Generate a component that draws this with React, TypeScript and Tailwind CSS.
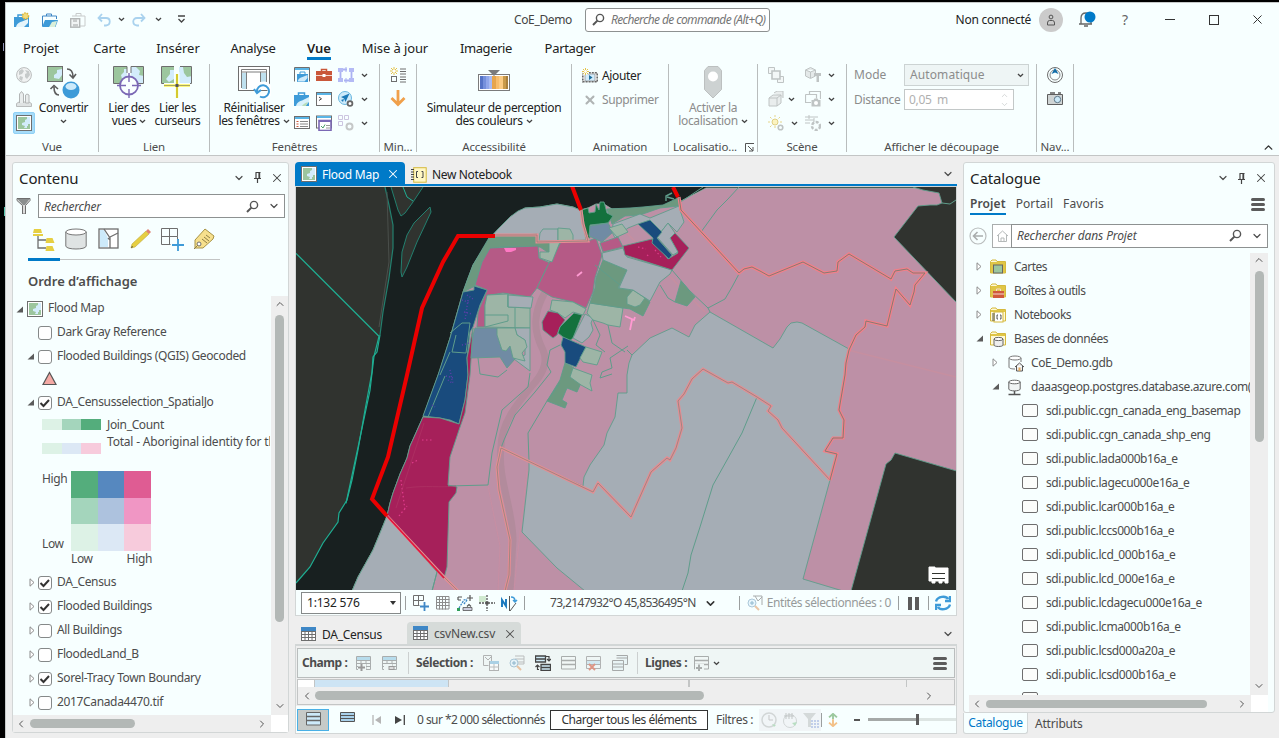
import React from "react";
import { ChevronDown, ChevronUp, ChevronLeft, ChevronRight, X } from "lucide-react";

type Kids = { children?: React.ReactNode };

/* ---------- helpers ---------- */
function Ico({ s = 16, vb = 16, className = "", children }: Kids & { s?: number; vb?: number; className?: string }) {
  return (
    <svg width={s} height={s} viewBox={`0 0 ${vb} ${vb}`} fill="none" className={`shrink-0 ${className}`}>
      {children}
    </svg>
  );
}
const Caret = ({ className = "" }: { className?: string }) => (
  <svg width="7" height="5" viewBox="0 0 7 5" fill="none" className={`shrink-0 ${className}`}>
    <path d="M1 1l2.5 2.4L6 1" stroke="#444" strokeWidth="1.4" />
  </svg>
);
const Down = ({ s = 12 }: { s?: number }) => <ChevronDown size={s} color="#4c4c4c" strokeWidth={2.4} className="shrink-0" />;
const Pin = () => (
  <Ico s={11} vb={11}>
    <path d="M3.500 .5h5M4 .5v6M2 6.500h7M5.500 6.500V11" stroke="#444" strokeWidth="1.2" />
    <path d="M7.300 .5v6" stroke="#444" strokeWidth="1.8" />
  </Ico>
);
const Magnifier = () => (
  <Ico s={13} vb={13}>
    <circle cx="8" cy="5" r="3.6" stroke="#555" strokeWidth="1.4" />
    <path d="M5.4 7.6L1 12" stroke="#555" strokeWidth="2" />
  </Ico>
);
const Burger = () => (
  <div className="flex w-[14px] shrink-0 flex-col gap-[2px]">
    <div className="h-[3px] rounded-sm bg-[#5b5b5b]" />
    <div className="h-[3px] rounded-sm bg-[#5b5b5b]" />
    <div className="h-[3px] rounded-sm bg-[#5b5b5b]" />
  </div>
);

/* ---------- icons ---------- */
const MapIcon = ({ s = 16 }: { s?: number }) => (
  <Ico s={s}>
    <rect x=".5" y=".5" width="15" height="15" fill="#fff" stroke="#6e6e6e" />
    <rect x="2" y="2" width="12" height="12" fill="#9cc69e" />
    <path d="M14 2v7h-2v2h-1v2H8l1-2-3-1V8l3-1V5l2-1V2z" fill="#d3ecfb" />
  </Ico>
);
const Globe = () => (
  <Ico>
    <circle cx="8" cy="8" r="7.4" fill="#f0f2f2" stroke="#b9bcbc" />
    <path d="M3 4l3-2 2 2-2 3-3 1zM9 3l4 1 1 4-3 4-2-2V7l2-1zM4 9l3 1-1 4-3-2z" fill="#c6caca" />
  </Ico>
);
const LocalScene = () => (
  <Ico>
    <path d="M.5 12.500l2.500-1.500h10l2.500 1.500v3H.5z" fill="#dfe3e3" stroke="#b9bcbc" />
    <path d="M3.500 12V3L5.500.5 7.500 3v9M9.500 12V4l1.500-1 2 1v8z" fill="#e9eded" stroke="#b3b6b6" />
  </Ico>
);
const Convert = () => (
  <Ico s={33} vb={33}>
    <rect x=".5" y=".5" width="15" height="15" fill="#9cc69e" stroke="#6e6e6e" />
    <path d="M15 3v6l-3 4-5-1v-3l3-2V4z" fill="#d3ecfb" />
    <circle cx="24" cy="24" r="8.500" fill="#3e9bd8" />
    <ellipse cx="24" cy="20.500" rx="5.500" ry="3.500" fill="#cdeafa" />
    <path d="M20 3c4 0 6 3 6 8M22.500 8.500l3.500 3.500 3-4M12 29c-4 0-5-3-5-8M3.500 23l3.500-3.500L11 23" stroke="#5c5c5c" strokeWidth="1.600" />
  </Ico>
);
const LinkViews = () => (
  <Ico s={33} vb={33}>
    <path d="M1 1h13v10l-5 6H1z" fill="#9cc69e" /><path d="M14 3v9l-5 1-1-4 3-3V3z" fill="#d3ecfb" />
    <path d="M18 1h13v16h-5l-8-6z" fill="#d3ecfb" /><path d="M23 1h8v9l-5-1 1-4z" fill="#9cc69e" />
    <path d="M8 17.500H.5V.5H14V7M18 7V.5h12.500v17H25" stroke="#6e6e6e" />
    <circle cx="16" cy="19.500" r="9" fill="#f9ffff" stroke="#7b68b5" strokeWidth="1.800" />
    <path d="M16 7v9M16 23v9M4 19.500h9M19 19.500h9" stroke="#7b68b5" strokeWidth="1.400" />
  </Ico>
);
const LinkCursors = () => (
  <Ico s={33} vb={33}>
    <path d="M1 1h12v16H1z" fill="#9cc69e" /><path d="M13 4v9l-5 3-3-3 4-5V4z" fill="#d3ecfb" />
    <path d="M18 1h13v16H18z" fill="#d3ecfb" /><path d="M22 1h9v9l-5 1-3-4z" fill="#9cc69e" />
    <path d="M13 17.500H.5V.5H13M19 .5h11.500v17H19" stroke="#6e6e6e" />
    <path d="M16 6v26M3 19.500h26" stroke="#f8ffff" strokeWidth="5" />
    <path d="M16 8v24M3 19.500h26" stroke="#ffef00" strokeWidth="2.200" />
    <path d="M16 8v24M3 19.500h26" stroke="#888" strokeWidth=".7" />
    <rect x="14.500" y="18" width="3" height="3" fill="#555" />
  </Ico>
);
const ResetPanes = () => (
  <Ico s={33} vb={33}>
    <rect x=".5" y=".5" width="31" height="24" fill="#fff" stroke="#6e6e6e" />
    <path d="M3.500 22V3.500h25V20M8.500 6v17M22.500 6v14M3 6h26" stroke="#7d7d7d" />
    <path d="M4 7h4v16H4zM23 7h5v13h-5z" fill="#bfe0ee" />
    <path d="M19 25a6.500 6.500 0 1 1 3 5" stroke="#fff" strokeWidth="5" />
    <path d="M19 26a6 6 0 1 1 3 4.500M16 23l3 4 4-3" stroke="#3e9bd8" strokeWidth="2" />
  </Ico>
);
const CatalogWin = () => (
  <Ico>
    <path d="M.5 14.500V.5h15v14" stroke="#6e6e6e" /><path d="M1 1h14v2H1z" fill="#5ab5e6" />
    <path d="M3 7h11v8H3z" fill="#3e9bd8" /><path d="M6 7V5h5v2" stroke="#3e9bd8" /><path d="M3.500 14.500c1-3 3-4 5-4.500l5-2v3l-3 3.500z" fill="#cdeafa" />
  </Ico>
);
const Toolbox = () => (
  <Ico>
    <path d="M0 4h16v10H0z" fill="#c9573a" /><path d="M5.500 4V2.500h5V4" stroke="#c9573a" strokeWidth="1.500" />
    <path d="M0 8.500h16" stroke="#f4d8cf" /><rect x="6.500" y="7" width="3" height="3" fill="#fff" />
  </Ico>
);
const ModelIcon = () => (
  <Ico>
    <path d="M2.500 3v9M4 2.500h5M13.500 3v9M12 13.500H6" stroke="#aab1f2" strokeWidth="1.800" />
    <path d="M0 1h5v4H0zM11 1h5v4h-5zM11 11h5v4h-5zM0 11h5v4H0z" fill="#b4baf5" /><path d="M8 0v5M8 11v5" stroke="#aab1f2" />
  </Ico>
);
const CaseIcon = () => (
  <Ico>
    <path d="M0 4h15v11H0z" fill="#3e9bd8" /><path d="M4.500 4V2h6v2" stroke="#3e9bd8" strokeWidth="1.500" />
    <path d="M2 15c1-4 4-5 6-5.500L15 6v5l-4 4z" fill="#d9f1fb" /><path d="M8 15c1-2 3-3 6-4l-2 4z" fill="#b9ddb9" />
  </Ico>
);
const PyWin = () => (
  <Ico>
    <rect x=".5" y="1.500" width="15" height="13" fill="#fff" stroke="#6e6e6e" /><path d="M1 2h14v2H1z" fill="#5ab5e6" />
    <path d="M3 6l2.500 1.800L3 9.500" stroke="#444" />
  </Ico>
);
const Plane = () => (
  <Ico>
    <circle cx="7" cy="7" r="6.500" fill="#cdeafa" stroke="#69b7e0" />
    <path d="M11.500 2.500L3 6l3 1.500L7.500 11z M3 9l3-1-1 3z" fill="#1b7ab8" />
    <circle cx="12" cy="12.500" r="2.400" fill="#fff" stroke="#666" strokeWidth="1.800" />
  </Ico>
);
const ListWin = () => (
  <Ico>
    <rect x=".5" y="1.500" width="15" height="12" fill="#fff" stroke="#6e6e6e" /><path d="M1 2h14v2H1z" fill="#5ab5e6" />
    <path d="M2.500 6.500h2M2.500 9h2M2.500 11.500h2" stroke="#c9573a" /><path d="M6 6.500h8M6 9h8M6 11.500h8" stroke="#888" />
  </Ico>
);
const TaskWin = () => (
  <Ico>
    <rect x=".5" y="1" width="15" height="12" fill="#fff" stroke="#6e6e6e" /><path d="M1 1h14v2H1z" fill="#5ab5e6" />
    <rect x="3" y="5.500" width="12" height="10" fill="#fff" stroke="#7b68b5" strokeWidth="1.600" /><path d="M3 6.500h12" stroke="#7b68b5" />
    <path d="M5 11l2 2 2-3.500" stroke="#4b9e6a" /><path d="M10 10.500h4M10 13h4" stroke="#999" />
  </Ico>
);
const GridGear = () => (
  <Ico>
    <path d="M.5 .5h4v4h-4zM6.500 .5h4v4h-4zM.5 6.500h4v4h-4z" stroke="#ccc5e0" />
    <circle cx="11.500" cy="11.500" r="3" stroke="#c5c8c8" strokeWidth="2" />
  </Ico>
);
const ListStar = () => (
  <Ico>
    <rect x="1.500" y="9.500" width="5" height="5" stroke="#6e6e6e" /><path d="M10 2h6M10 4.500h6M10 7h6M10 10h6M10 12.500h6M10 15h6" stroke="#6e6e6e" />
    <path d="M4 0v8M0 4h8M1 1l6 6M7 1L1 7" stroke="#e5c44a" /><circle cx="4" cy="4" r="1.500" fill="#fff" />
  </Ico>
);
const OrangeDown = () => (
  <Ico s={18} vb={18}><path d="M9 1v14M2.500 9L9 15.500 15.500 9" stroke="#f0a04b" strokeWidth="2.800" /></Ico>
);
const ColorVision = () => (
  <svg width="32" height="22" viewBox="0 0 32 22" fill="none">
    <rect x=".5" y="4.500" width="31" height="16" fill="#fff" stroke="#7b7b7b" />
    <path d="M2 6h3v13H2z" fill="#5573c6" /><path d="M5 6h3v13H5z" fill="#7590dc" /><path d="M8 6h3v13H8z" fill="#91a7ea" /><path d="M11 6h3v13h-3z" fill="#a8bbf3" />
    <path d="M14 6h4v13h-4z" fill="#e6a54c" /><path d="M18 6h3v13h-3z" fill="#f7bd6b" /><path d="M21 6h4v13h-4z" fill="#fbcb83" /><path d="M25 6h3v13h-3z" fill="#c99a4a" /><path d="M28 6h2v13h-2z" fill="#a87f3c" />
    <path d="M10 0h12l-6 6z" fill="#7b7b7b" />
  </svg>
);
const FilmAdd = () => (
  <Ico>
    <rect x=".8" y="4.800" width="14.400" height="9" fill="#fff" stroke="#666" strokeWidth="1.600" strokeDasharray="2 1" />
    <rect x="3" y="6" width="10" height="7" fill="#d3ecfb" stroke="#777" strokeWidth=".6" /><path d="M7 7l3.500 2.500L7 12z" fill="#1b6e9e" />
    <circle cx="3.500" cy="3.500" r="3.500" fill="#f7ffff" />
    <path d="M3.500 0v7M0 3.500h7M1 1l5 5M6 1L1 6" stroke="#e5c44a" /><circle cx="3.500" cy="3.500" r="1.400" fill="#fff" />
  </Ico>
);
const GpsPin = () => (
  <svg width="18" height="33" viewBox="0 0 18 33" fill="none">
    <path d="M4 .5h10l3.500 4v19L9 32 .5 23.500v-19z" fill="#cdd2d2" stroke="#bcc0c0" /><circle cx="9" cy="10.500" r="5" fill="#fff" />
  </svg>
);
const G = "#bfc4c4";
const SceneCopy = () => <Ico><path d="M.5 .5h6v6h-6zM9.500 9.500h6v6h-6z" fill="#f3f7f7" stroke={G} /><path d="M4 4h8v8H4z" fill="#f3f7f7" stroke={G} strokeWidth="1.600" /></Ico>;
const SceneCube = () => <Ico><path d="M.5 3l5-2.500 5 2.500v6l-5 2.500-5-2.500zM.5 3l5 2 5-2M5.500 5v6" fill="#e4e9e9" stroke={G} /><path d="M9 6h7v3H9zM11.500 9h2.500v6h-2.500z" fill={G} /></Ico>;
const SceneBox = () => <Ico><path d="M1 7h8v8H1zM1 7l4-3h8v8l-4 3M9 7l4-3M6 2l3-2h6v7" fill="#e9eded" stroke={G} /></Ico>;
const SceneCam = () => <Ico><path d="M4.500 4V.5h11V8M.500 3.500h11v4M.5 3.500v8H6" stroke={G} strokeWidth="1.200" /><path d="M6.500 9h2l1-1.500h3l1 1.500h2v6.500h-9z" fill={G} /><circle cx="11" cy="12" r="2" fill="#fff" /></Ico>;
const SceneSun = () => (
  <Ico>
    <circle cx="7" cy="7" r="3" fill="#fbf3c0" stroke="#e0cf85" /><path d="M7 0v2M0 7h2M2 2l1.500 1.500M12 2l-1.500 1.500M12 7h2M2 12l1.500-1.500M6 12h2" stroke="#e6d58a" />
    <circle cx="12.500" cy="12.500" r="2.300" stroke={G} strokeWidth="1.600" />
  </Ico>
);
const SceneFx = () => <Ico><path d="M0 2h13M0 5h9M0 8h5M4 0v4M9 3v4" stroke={G} /><circle cx="11" cy="11" r="4" stroke={G} strokeWidth="2.400" strokeDasharray="3 1.500" /></Ico>;
const Compass = () => (
  <Ico>
    <circle cx="8" cy="8" r="7.500" stroke="#6e6e6e" /><circle cx="8" cy="8" r="5" stroke="#888" /><path d="M8 1l3.500 6L8 5.500 4.500 7z" fill="#0f6ca8" />
  </Ico>
);
const Camera = () => (
  <Ico>
    <path d="M.5 3.500h15v10H.5z" fill="#cfd4d4" stroke="#5e5e5e" /><path d="M3 2h5M11 2h3" stroke="#5e5e5e" strokeWidth="1.500" /><circle cx="10.500" cy="8.500" r="3.200" fill="#cbe9f8" stroke="#5e7788" />
  </Ico>
);
const TableIcon = () => (
  <Ico s={15} vb={15}>
    <rect x=".5" y=".5" width="14" height="13" fill="#fff" stroke="#6e6e6e" /><path d="M0 0h15v4H0z" fill="#3e87c6" />
    <path d="M0 4.500h15M0 7.500h15M0 10.500h15M4 4v10M7.500 4v10M11 4v10" stroke="#6e6e6e" />
  </Ico>
);
const FieldIcon = ({ add }: { add?: boolean }) => (
  <Ico s={15} vb={15}>
    <path d="M.5 .5h14v13H.5zM0 4.500h15M0 7.500h15M0 10.500h15M5 4v10M10 4v10" stroke="#a9adad" /><path d="M1 1h13v3H1z" fill="#b7dcec" />
    <rect x="2" y="8" width="8" height="7" fill="#eff6f5" />
    {add ? <path d="M5.500 8v7M2 11.500h7" stroke="#999" strokeWidth="2" /> : <rect x="7" y="10.500" width="5" height="3" fill="#ddd" stroke="#999" />}
  </Ico>
);
const Rows = ({ dim = false, blue = false, add = false }: { dim?: boolean; blue?: boolean; add?: boolean }) => (
  <svg width="15" height="15" viewBox="0 0 15 15" fill="none" className={dim ? "shrink-0 opacity-50" : "shrink-0"}>
    <path d="M.5 .5h14v12.500H.5z" fill={blue ? "#cdeafa" : "#f4f8f8"} stroke="#666" /><path d="M0 4.500h15M0 8.500h15" stroke="#666" strokeWidth="1.300" />
    {add && <><path d="M1 8h9v7H1z" fill="#eff6f5" /><path d="M5 8.500V15M2 12h6" stroke="#666" strokeWidth="2" /></>}
  </svg>
);
const Folder = ({ children }: Kids) => (
  <Ico>
    <path d="M.5 14V2.500L2 1h4l1 1.500h8.500V14z" fill="#fff9d5" stroke="#d5b93d" /><path d="M1 3h14v2H1z" fill="#e0c646" />
    {children}
  </Ico>
);

/* ---------- ribbon ---------- */
function Group({ w, label, children }: Kids & { w: string; label: React.ReactNode }) {
  return (
    <div className={`flex h-[88px] shrink-0 flex-col border-r border-[#b9bdbd] ${w}`}>
      <div className="flex h-[74px] shrink-0">{children}</div>
      <div className="flex h-[18px] shrink-0 items-center justify-center text-[11.500px] tracking-[-0.15px] text-[#4c4c4c]">{label}</div>
    </div>
  );
}
function Big({ icon, a, b, w, dim, caret }: { icon: React.ReactNode; a: string; b?: string; w: string; dim?: boolean; caret?: boolean }) {
  return (
    <div className={`flex shrink-0 flex-col items-center ${w} ${dim ? "text-[#8c8c8c]" : "text-[#222]"}`}>
      <div className="flex h-[37px] items-start justify-center pt-[2px]">{icon}</div>
      <div className="h-[13px] whitespace-nowrap leading-[13px]">{a}</div>
      <div className="flex h-[14px] items-center gap-[3px] whitespace-nowrap leading-[14px]">
        {b}
        {caret && <Caret />}
      </div>
    </div>
  );
}
function TitleBar() {
  return (
    <div className="flex h-[33px] shrink-0 items-center">
      <div className="flex w-[190px] items-center pl-[8px]">
        <Ico>
          <path d="M0 5h15v10H0z" fill="#3e9bd8" /><path d="M4 5V3h5" stroke="#3e9bd8" strokeWidth="1.500" /><path d="M2 15c1-4 4-5 6-5.500L14 7v4l-4 4z" fill="#e5f5fb" />
          <circle cx="11.500" cy="4" r="3" fill="#f3dc7b" stroke="#dcb63c" strokeWidth="1.500" strokeDasharray="1.500 1" />
        </Ico>
        <div className="w-[12px]" />
        <Ico>
          <path d="M.5 14V4h14v3" stroke="#3e87c6" /><path d="M4.500 4V2h5v2" stroke="#3e87c6" /><path d="M3 8h13l-2.500 7H0z" fill="#3e9bd8" /><path d="M7 15l3-5 5-1-2 6z" fill="#d9efd9" />
        </Ico>
        <div className="w-[12px]" />
        <Ico className="opacity-60">
          <path d="M2 4h13v10H9M6 4V1.500h5V4" stroke="#aaa" /><rect x=".7" y="6.700" width="9" height="8.500" fill="#eee" stroke="#888" strokeWidth="1.400" /><path d="M3 7h4v3H3zM3 12h5v3H3z" fill="#aaa" />
        </Ico>
        <div className="w-[11px]" />
        <Ico><path d="M5 2L1.500 6 5 9.500M2 6h7c5 0 5 7 0 7.500H7" stroke="#a9d2ee" strokeWidth="1.800" /></Ico>
        <Caret className="ml-[5px]" />
        <Ico className="ml-[6px]"><path d="M10 2l3.500 4L10 9.500M13 6H6C1 6 1 13 6 13.500h2" stroke="#a9d2ee" strokeWidth="1.800" /></Ico>
        <Caret className="ml-[8px]" />
        <Ico s={9} vb={9} className="ml-[15px]"><path d="M1 1h7M1.500 4l3 3 3-3" stroke="#444" strokeWidth="1.300" /></Ico>
      </div>
      <div className="w-[390px] pr-[14px] text-right text-[#444]">CoE_Demo</div>
      <div className="-ml-px flex h-[24px] w-[185px] items-center gap-[6px] whitespace-nowrap rounded-[3px] border border-[#8d9191] bg-white pl-[6px] italic tracking-[-0.63px] text-[#757575]">
        <Magnifier />Recherche de commande (Alt+Q)
      </div>
      <div className="flex flex-1 items-center justify-end pr-[14px]">
        <span className="tracking-[-0.25px] text-[#222]">Non connecté</span>
        <div className="ml-[8px] flex h-[24px] w-[24px] items-center justify-center rounded-full bg-[#cbcbcb]">
          <Ico s={12} vb={12}><circle cx="6" cy="3" r="1.900" stroke="#555" /><path d="M2.500 11V9q0-2.500 2-2.500h3q2 0 2 2.500v2z" stroke="#555" /></Ico>
        </div>
        <Ico s={17} vb={17} className="ml-[16px]">
          <path d="M2 13V7q0-5 5-5t5 5v6M0 13h13M5 15h4" stroke="#666" strokeWidth="1.300" /><circle cx="11" cy="6" r="5.500" fill="#007ac8" />
        </Ico>
        <span className="ml-[26px] w-[8px] text-[14px] text-[#666]">?</span>
        <div className="ml-[35px] h-px w-[10px] bg-[#333]" />
        <div className="ml-[34px] h-[10px] w-[10px] border border-[#333]" />
        <X size={15} color="#333" strokeWidth={1.600} className="ml-[31px]" />
      </div>
    </div>
  );
}
function Ribbon() {
  return (
    <div className="flex h-[153px] shrink-0 flex-col border-b border-[#c3c5c5] bg-[#f7ffff]">
      <TitleBar />
      <div className="flex h-[25px] shrink-0 items-start text-[13px] leading-[24px] tracking-[-0.05px] text-[#222]">
        <div className="w-[70px] text-center">Projet</div>
        <div className="ml-[8px] w-[51px] text-center">Carte</div>
        <div className="ml-[13px] w-[60px] text-center">Insérer</div>
        <div className="ml-[14px] w-[60px] pl-[2px] text-center tracking-[-0.3px]">Analyse</div>
        <div className="ml-[19px] flex w-[36px] flex-col items-center">
          <div className="h-[21px] font-semibold">Vue</div>
          <div className="h-[3px] w-[24px] bg-[#007ac8]" />
        </div>
        <div className="ml-[14px] w-[88px] text-center tracking-[-0.1px]">Mise à jour</div>
        <div className="ml-[15px] w-[64px] text-center tracking-[-0.4px]">Imagerie</div>
        <div className="ml-[19px] w-[66px] text-center tracking-[-0.3px]">Partager</div>
      </div>
      <div className="flex pt-[3px]">
        <Group w="w-[93px]" label="Vue">
          <div className="flex w-[34px] flex-col items-center pl-[2px] pt-[3px]">
            <Globe />
            <div className="h-[8px]" />
            <LocalScene />
            <div className="mt-[5px] flex h-[22px] w-[22px] items-center justify-center rounded-[2px] border border-[#8fd0f5] bg-[#a6dcf9]"><MapIcon /></div>
          </div>
          <Big w="w-[47px]" icon={<div className="-ml-[1px]"><Convert /></div>} a="Convertir" caret />
        </Group>
        <Group w="w-[111px]" label="Lien">
          <Big w="w-[60px]" icon={<LinkViews />} a="Lier des" b="vues" caret />
          <Big w="w-[37px]" icon={<LinkCursors />} a="Lier les" b="curseurs" />
        </Group>
        <Group w="w-[170px]" label="Fenêtres">
          <Big w="w-[88px]" icon={<ResetPanes />} a="Réinitialiser" b="les fenêtres" caret />
          <div className="-ml-[4px] grid h-[72px] grid-cols-[22px_22px_23px_8px] content-start items-center gap-y-[8px] pt-[3px]">
            <CatalogWin /><Toolbox /><ModelIcon /><Caret />
            <CaseIcon /><PyWin /><Plane /><Caret />
            <ListWin /><TaskWin /><GridGear /><Caret />
          </div>
        </Group>
        <Group w="w-[37px]" label="Min...">
          <div className="flex w-full flex-col items-center gap-[6px] pt-[3px]"><ListStar /><OrangeDown /></div>
        </Group>
        <Group w="w-[155px]" label="Accessibilité">
          <Big w="w-[154px]" icon={<div className="pt-[4px]"><ColorVision /></div>} a="Simulateur de perception" b="des couleurs" caret />
        </Group>
        <Group w="w-[97px]" label="Animation">
          <div className="flex flex-col gap-[8px] pl-[10px] pt-[4px] leading-[16px]">
            <div className="flex items-center gap-[4px] text-[#222]"><FilmAdd />Ajouter</div>
            <div className="flex items-center gap-[4px] text-[#8c8c8c]"><div className="w-[16px] pl-px"><X size={14} color="#b0b4b4" strokeWidth={3.500} /></div>Supprimer</div>
          </div>
        </Group>
        <Group
          w="w-[89px]"
          label={<><span>Localisatio...</span><Ico s={9} vb={9} className="-mr-[1px] ml-[8px]"><path d="M.5 9V.5H9M3 3l5 5M8 4v4H4" stroke="#555" /></Ico></>}
        >
          <Big w="w-[88px]" icon={<GpsPin />} a="Activer la" b="localisation" dim caret />
        </Group>
        <Group w="w-[89px]" label="Scène">
          <div className="flex flex-col gap-[8px] pl-[10px] pt-[3px]">
            <div className="flex items-center"><SceneCopy /><div className="w-[21px]" /><SceneCube /><Caret className="ml-[7px]" /></div>
            <div className="flex items-center"><SceneBox /><Caret className="ml-[4px] mr-[10px]" /><SceneCam /><Caret className="ml-[7px]" /></div>
            <div className="flex items-center"><SceneSun /><Caret className="ml-[7px] mr-[7px]" /><SceneFx /><Caret className="ml-[7px]" /></div>
          </div>
        </Group>
        <Group w="w-[190px]" label="Afficher le découpage">
          <div className="flex flex-col gap-[3px] pl-[7px] text-[#8c8c8c]">
            <div className="flex items-center"><div className="w-[50px] tracking-[0px]">Mode</div>
              <div className="flex h-[22px] w-[125px] items-center justify-between border border-[#ccd3d3] bg-[#eef5f5] pl-[5px] pr-[4px] tracking-[0.1px]">Automatique<Caret /></div>
            </div>
            <div className="flex items-center"><div className="w-[50px] tracking-[-0.25px]">Distance</div>
              <div className="flex h-[21px] w-[110px] items-center justify-between border border-[#c3c8c8] bg-white pl-[4px] pr-[4px] text-[#b0b0b0]"><span>0,05 &nbsp;m</span>
                <div className="flex flex-col"><ChevronUp size={9} color="#c9cdcd" /><ChevronDown size={9} color="#c9cdcd" /></div></div>
            </div>
          </div>
        </Group>
        <Group w="w-[37px]" label="Nav...">
          <div className="flex w-full flex-col items-center gap-[8px] pt-[3px]"><Compass /><Camera /></div>
        </Group>
        <div className="flex flex-1 items-end justify-end pr-[4px]"><ChevronUp size={13} color="#333" strokeWidth={2.600} className="-mb-[2px]" /></div>
      </div>
    </div>
  );
}

/* ---------- contents pane ---------- */
const Check = ({ on }: { on?: boolean }) => (
  <div className="flex h-[14px] w-[14px] shrink-0 items-center justify-center rounded-[3px] border border-[#858989] bg-white">
    {on && <Ico s={12} vb={12}><path d="M1.500 6l3 3L10 3" stroke="#333" strokeWidth="2" /></Ico>}
  </div>
);
const Open = () => <Ico s={7} vb={7}><path d="M7 .5v6H.5z" fill="#5b5b5b" /></Ico>;
const Closed = () => (
  <svg width="6" height="9" viewBox="0 0 6 9" fill="none" className="shrink-0"><path d="M1 .8v7.400L5 4.500z" fill="#fff" stroke="#8c8c8c" /></svg>
);

function Layer({ name, on, open, closed }: { name: string; on?: boolean; open?: boolean; closed?: boolean }) {
  return (
    <div className="flex h-[24px] shrink-0 items-center pl-[13px]">
      <div className="flex w-[12px] items-center pb-px pl-px">{open ? <Open /> : closed ? <div className="pb-px pl-[2px]"><Closed /></div> : null}</div>
      <Check on={on} />
      <span className="ml-[5px] whitespace-nowrap pb-[2px]">{name}</span>
    </div>
  );
}
function Contents() {
  return (
    <div className="ml-[6px] flex h-[571px] w-[277px] shrink-0 flex-col rounded-[3px] border border-[#d2d6d6] bg-[#f7ffff] text-[#4c4c4c]">
      <div className="flex h-[31px] shrink-0 items-center pb-[2px] pl-[6px] pr-[4px]">
        <span className="flex-1 text-[15px] tracking-[-0.1px] text-[#222]">Contenu</span>
        <Down /><div className="w-[7px]" /><Pin /><div className="w-[7px]" /><X size={14} color="#444" strokeWidth={1.800} />
      </div>
      <div className="flex h-[24px] shrink-0 items-center pl-[3px]">
        <Ico className="mr-[6px]"><path d="M1 .5h13v2L9.500 7.500V16h-3V7.500L1 2.500z" fill="#ddd" stroke="#6e6e6e" /><path d="M1.500 1h12L9 7H7z" fill="#8b8f8f" /></Ico>
        <div className="flex h-[24px] w-[247px] items-center border border-[#8d9191] bg-white pl-[5px] italic tracking-[-0.2px]">
          <span className="flex-1 pt-px">Rechercher</span><Magnifier /><div className="w-[9px]" /><Down /><div className="w-[4px]" />
        </div>
      </div>
      <div className="flex h-[41px] shrink-0 items-start pl-[15px] pt-[10px]">
        <div className="flex w-[32px] flex-col items-center">
          <Ico s={24} vb={24}><path d="M6 8v12h8M6 12h8" stroke="#6e6e6e" strokeWidth="1.300" /><path d="M2 1h7l1 4H1zM1 6h10v2H1zM14.500 10h6l2 5h-9zM14.500 18h6l2 5h-9z" fill="#e6cf42" /></Ico>
        </div>
        <div className="flex w-[32px] justify-center"><Ico s={22} vb={22}><path d="M.8 4v14c0 4 20.400 4 20.400 0V4z" fill="#dfe3e3" stroke="#777" /><ellipse cx="11" cy="4" rx="10.200" ry="3" fill="#fff" stroke="#777" /></Ico></div>
        <div className="flex w-[32px] justify-center"><Ico s={21} vb={21}><rect x="1" y="1" width="19" height="19" fill="#fff" stroke="#6e6e6e" strokeWidth="1.300" /><path d="M2 2h4l4 8v9H2z" fill="#cdeafa" /><path d="M6 1l6 9v10M12 9l8-4M10 10l2 2" stroke="#6e6e6e" strokeWidth="1.300" /></Ico></div>
        <div className="flex w-[32px] justify-center"><Ico s={21} vb={21}><path d="M1 20l1-4L16 3l3 3L5 19z" fill="#e6cf42" stroke="#bda63a" strokeWidth=".6" /><path d="M16 3l2-2 3 3-2 2z" fill="#df8272" /><path d="M1 20l1-2 1 1z" fill="#333" /></Ico></div>
        <div className="flex w-[32px] justify-center"><Ico s={23} vb={23}><path d="M.5 .5h16v8M.5 .5v16h9M8.500 .5v16M.5 8.500h16v3" stroke="#6e6e6e" /><path d="M17 11v12M11 17h12" stroke="#3e9bd8" strokeWidth="1.800" /></Ico></div>
        <div className="flex w-[32px] justify-center"><Ico s={22} vb={22}><path d="M12 1l9 7-1 3-10 9H2v-8z" fill="#f7e08d" stroke="#a89446" /><circle cx="6" cy="16" r="2" fill="#fff" stroke="#6e6e6e" /><path d="M9 11l5 4M11 9l5 4M13 7l4 3M5 17l-4 4" stroke="#8e7e46" /></Ico></div>
      </div>
      <div className="mt-[-1px] flex h-[3px] shrink-0 items-center pl-[15px]"><div className="h-[3px] w-[32px] bg-[#007ac8]" /><div className="h-px w-[160px] bg-[#c3c5c5]" /></div>
      <div className="h-[35px] shrink-0 pl-[15px] pt-[11px] text-[13px] font-semibold leading-[18px] tracking-[0px]">Ordre d’affichage</div>
      <div className="flex min-h-0 flex-1">
        <div className="flex w-[257px] flex-col overflow-hidden">
          <div className="flex h-[25px] shrink-0 items-center pl-[3px] pt-px"><Open /><div className="w-[4px]" /><MapIcon /><span className="ml-[5px] pb-[2px]">Flood Map</span></div>
          <Layer name="Dark Gray Reference" />
          <Layer name="Flooded Buildings (QGIS) Geocoded" open />
          <div className="flex h-[22px] shrink-0 items-center pb-[3px] pl-[29px]"><Ico s={15} vb={15}><path d="M7.500 1.500L14 13.500H1z" fill="#f4a9a4" stroke="#555" strokeWidth="1.200" /></Ico></div>
          <Layer name="DA_Censusselection_SpatialJo" on open />
          <div className="flex h-[19px] shrink-0 items-center whitespace-nowrap pl-[29px]">
            <div className="flex h-[11px]"><div className="w-[20px] bg-[#ddf2e6]" /><div className="w-[19px] bg-[#a4d5bc]" /><div className="w-[20px] bg-[#54ad7c]" /></div>
            <span className="ml-[6px]">Join_Count</span>
          </div>
          <div className="flex h-[22px] shrink-0 items-start whitespace-nowrap pl-[29px]">
            <div className="mt-[9px] flex h-[11px] shrink-0"><div className="w-[20px] bg-[#ddf2e6]" /><div className="w-[19px] bg-[#dce8f5]" /><div className="w-[20px] bg-[#f7cbdc]" /></div>
            <span className="ml-[6px] tracking-[-0.2px]">Total - Aboriginal identity for the population</span>
          </div>
          <div className="flex h-[98px] shrink-0 pl-[29px] pt-[15px]">
            <div className="flex h-[80px] w-[29px] flex-col justify-between leading-[15px]"><span>High</span><span>Low</span></div>
            <div>
              <div className="grid h-[80px] w-[80px] grid-cols-3 grid-rows-3">
                <div className="bg-[#54ad7c]" /><div className="bg-[#5688bf]" /><div className="bg-[#df5c93]" />
                <div className="bg-[#a4d5bc]" /><div className="bg-[#adc2de]" /><div className="bg-[#f096c4]" />
                <div className="bg-[#ddf2e6]" /><div className="bg-[#dce8f5]" /><div className="bg-[#f7cbdc]" />
              </div>
              <div className="flex w-[81px] justify-between leading-[16px]"><span>Low</span><span>High</span></div>
            </div>
          </div>
          <div className="h-[17px] shrink-0" />
          <Layer name="DA_Census" on closed />
          <Layer name="Flooded Buildings" on closed />
          <Layer name="All Buildings" closed />
          <Layer name="FloodedLand_B" closed />
          <Layer name="Sorel-Tracy Town Boundary" on closed />
          <Layer name="2017Canada4470.tif" closed />
        </div>
        <div className="ml-px flex w-[17px] flex-col items-center bg-[#eee] pt-[2px]">
          <ChevronUp size={12} color="#555" /><div className="mt-[5px] h-[307px] w-[9px] rounded-full bg-[#b3b8b6]" />
          <div className="flex-1" /><ChevronDown size={12} color="#555" className="mb-[3px]" />
        </div>
      </div>
      <div className="flex h-[17px] shrink-0 items-center bg-white">
        <div className="flex h-[17px] w-[258px] items-center bg-[#eee] pl-[2px] pr-[3px]">
          <ChevronLeft size={12} color="#555" /><div className="ml-[3px] h-[9px] w-[105px] rounded-full bg-[#b3b8b6]" /><div className="flex-1" /><ChevronRight size={12} color="#555" />
        </div>
      </div>
    </div>
  );
}

/* ---------- map ---------- */
type Shape = [string, string];
const GRAY = "#a5adb5", LIGHT = "#9db5a6", GREEN = "#6c997f", ROSE = "#b55a86", CRIMSON = "#a6205a", NAVY = "#194b7d", FOREST = "#13713d", STEEL = "#708ba4", LAND = "#30332f";
const shapes: Shape[] = [
  [GRAY, "490,238 498,229 510,217 518,211 525,208 540,207 557,204 573,207 580,210 583,220 586,240 537,242 537,234"],
  [GREEN, "490,236 537,235 537,242 561,242 556,253 549,253 540,247 500,247 490,250 482,262 475,286 463,292 468,278 473,265"],
  [ROSE, "490,248 538,246 539,258 550,263 548,265 537,288 530,297 503,293 490,295 485,305 485,327 477,327 478,312 487,290 475,285 482,262"],
  [ROSE, "561,242 588,241 596,238 602,255 595,278 593,292 586,308 573,302 552,297 537,288 548,265"],
  [GRAY, "540,233 543,229 558,229 558,241 539,241"],
  [LIGHT, "558,228 570,229 573,235 573,241 558,241"],
  [LIGHT, "549,242 560,242 552,262 540,258 540,252 549,252"],
  [NAVY, "474,286 487,290 480,305 473,327 470,332 467,358 468,375 465,400 459,424 450,420 440,418 423,416 438,375 450,338 463,292 474,290"],
  [CRIMSON, "473,328 470,375 465,413 459,430 450,457 448,485 457,487 456,493 449,502 447,567 444,578 387,516 390,503 393,493 400,474 407,458 410,446 415,435 423,417 440,418 459,424 465,400 468,375 467,358"],
  [GRAY, "352,591 358,577 373,550 378,538 387,516 437,572 432,591"],
  [STEEL, "475,328 497,328 501,348 510,345 515,355 515,359 507,368 500,357 471,358 473,335"],
  [LIGHT, "487,295 508,294 508,307 530,308 530,328 485,327 485,305"],
  [GRAY, "508,295 533,297 531,308 508,307"],
  [GRAY, "515,328 530,328 530,371 514,359 525,355 525,340 517,335"],
  [LIGHT, "497,328 515,328 517,335 525,340 527,347 522,353 525,361 513,358 510,346 506,351 502,350 497,335"],
  [LIGHT, "552,300 573,302 586,309 583,315 573,312 565,318 558,313 550,310"],
  [CRIMSON, "548,311 558,313 565,320 560,327 557,335 553,338 543,330 542,322"],
  [FOREST, "574,313 582,315 573,338 568,342 563,337 558,333 560,327"],
  [GRAY, "585,314 593,318 591,323 593,330 589,337 582,343 573,338"],
  [LIGHT, "590,303 623,308 620,327 608,325 603,323 593,320 587,313"],
  [NAVY, "563,337 586,347 576,367 565,363 565,352 561,345"],
  [LIGHT, "586,347 602,352 597,365 583,362 580,358"],
  [GREEN, "565,363 574,368 570,377 581,383 577,392 567,388 562,400 567,403 565,408 547,401 560,380"],
  [LIGHT, "573,368 592,375 590,383 592,391 581,385 570,377"],
  [GREEN, "603,260 627,270 618,288 630,290 645,298 650,302 643,316 630,309 590,303 595,288 596,278"],
  [LIGHT, "627,297 633,290 645,298 640,305 635,307 627,304"],
  [GRAY, "602,253 623,248 627,257 672,270 670,274 660,282 650,301 633,290 619,288 627,270 603,260"],
  [GREEN, "607,209 630,208 643,207 663,205 678,198 679,206 660,208 640,215 625,216 612,224"],
  [FOREST, "582,210 588,208 589,213 595,212 596,204 599,210 600,202 604,202 607,213 613,216 608,223 590,225 590,238 586,238"],
  [STEEL, "590,226 608,223 613,232 602,242 589,236"],
  [GRAY, "613,224 640,214 650,218 679,206 681,213 684,222 677,232 668,223 657,237 638,224 628,228 615,238 612,232"],
  [LIGHT, "609,228 622,224 628,232 617,237"],
  [ROSE, "600,243 618,237 623,247 603,252"],
  [CRIMSON, "623,246 652,239 668,259 678,253 670,238 675,233 689,248 672,270 625,255"],
  [GRAY, "657,237 668,223 675,233 670,238 678,252 673,255"],
  [NAVY, "638,224 650,220 662,232 657,238 672,255 669,259 652,243 653,238"],
  [GREEN, "681,281 695,297 687,306 675,302"],
  [GRAY, "710,312 773,348 780,339 787,327 791,323 797,322 802,323 849,349 845,375 839,410 844,420 843,438 833,438 825,451 837,454 830,480 803,579 843,591 585,591 557,568 522,532 529,470 529,462 583,486 584,477 590,465 604,445 607,433 615,417 618,393 627,393 627,375 629,363 632,355 650,338 672,328 689,337 695,325"],
  [LAND, "913,187 923,190 939,193 942,203 937,205 930,205 918,206 894,237 956,302 960,302 960,180"],
  [LAND, "851,591 886,464 891,460 895,453 960,472 960,595"],
];
const tealLines = [
  "703,187 679,203", "739,187 728,199 717,210 701,232", "739,274 732,287 725,299 708,308 710,312", "708,308 689,290 672,270",
  "448,486 488,485 492,453 502,410 528,387 530,373", "547,401 528,433 529,462", "757,397 742,433 727,460 713,485 700,527 691,555 688,573 682,591",
  "437,572 432,591", "508,294 508,307", "485,315 508,315", "515,308 515,328", "485,327 508,321 508,315",
  "450,333 462,323 470,323 466,353 452,352 456,335", "445,376 428,417", "450,352 440,375",
  "593,320 600,335 596,345 605,352", "478,358 480,374 498,377 507,370", "608,325 612,343 625,352",
  "660,285 668,298 675,302", "560,345 550,350 547,365 551,372 535,392 515,415 504,440 501,448", "595,265 620,285", "628,346 610,358 612,368 602,372 600,378 612,374",
  "627,350 632,355", "560,383 547,401", "942,203 950,204 956,200",
];
const salmon = [
  "679,197 681,210 739,273 744,269 752,267 760,271 769,276 803,262 824,273 837,271 838,262 849,254 891,279 895,271 907,269 913,273 925,273 915,285 914,292 910,305 896,289 887,326 866,321 865,327 856,335 849,350 846,363 845,375 839,410 844,420 843,438 833,438 825,451 837,454 830,480",
];
const softSalmon = [
  "830,480 782,428 778,420 768,411 771,406 757,397 732,382 728,383 703,369 692,379 684,394 678,401 682,428 676,448 670,460 667,458 651,472 631,517 598,483 593,492 501,448 497,467 499,490 510,540 509,575 505,591",
  "495,235 537,235 537,242 588,241 583,224 581,210", "387,516 445,578 458,591",
];
function FloodMap() {
  return (
    <svg width="660" height="403" viewBox="296 187 660 403" fill="none" className="shrink-0">
      <rect x="296" y="187" width="660" height="404" fill="#182020" />
      <path d="M296 187H385L389 205 393 225V248L389 278 383 312 380 335 377 352 373 357 372 372 365 410 358 450 352 480 347 500 339 513 338 522 323 543 310 567 296 583z" fill={LAND} />
      <path d="M385 187l4 18 4 20v23l-4 30-6 34-3 23" stroke="#23806f" strokeWidth="1.200" />
      <path d="M380 335l-3 17-4 5-1 15-7 38-7 40-6 30-5 20-8 13-1 9-15 21-13 24-14 16" stroke="#1fae93" strokeWidth="1.200" />
      <path d="M296 253.300L379 336.300l-5 20-4 34-12 57-12 56" stroke="#1fae93" strokeWidth="1.200" />
      <path d="M387 192l2 70-10 65" stroke="#4a4f4b" />
      <path d="M391 187l7 23 3 6 4-3 8-11 10-15" fill={LAND} stroke="#23806f" />
      <path d="M403 187l4 10 6 4" stroke="#1fae93" />
      <path d="M430 207l-16 16-7 12-5 17-1 20 1 5 5-10 10-25 8-17 6-13z" fill={LAND} stroke="#23806f" />
      <path d="M352 591l6-14 15-27 5-12 9-22 3-13 3-10 7-19 7-16 3-12 5-11 8-18 17-47 10-32 13-46 10-27 17-27 20-21 15-9 15-1 17-3 16 3 7 3 8-2 8-4 8 0 8 5h21l13-1 20-2 15-5 25-13H960V595H352z" fill="#bd90a6" stroke="#8fb9a8" strokeWidth=".8" />
      <path d="M545 292c-12 22-12 38-2 58 6 14-2 26-12 37-14 17-30 36-30 60-4 30 12 62 12 93l-3 51" stroke="#b28b9c" strokeWidth="7" />
      <path d="M848 350l108 27M620 226l85 86" stroke="#c68fa0" strokeWidth="1.500" />
      <path d="M488 486l12 60-2 45M527 470l-10 90-3 31" stroke="#c98ea2" strokeWidth=".8" />
      {shapes.map(([fill, pts], i) => <polygon key={i} points={pts} fill={fill} stroke="#5f9d8b" strokeWidth=".9" />)}
      {tealLines.map((p, i) => <polyline key={i} points={p} stroke="#5f9d8b" strokeWidth="1" />)}
      {softSalmon.map((p, i) => <g key={i}><polyline points={p} stroke="#e58d93" strokeWidth="3" /><polyline points={p} stroke="#98857f" strokeWidth=".9" /></g>)}
      {salmon.map((p, i) => <g key={i}><polyline points={p} stroke="#f37f88" strokeWidth="3.200" /><polyline points={p} stroke="#857b72" strokeWidth="1" /></g>)}
      <path d="M387 516L372 499l16-42 19-82 15-67 21-46 15-26h37M572 186l9 24M673 187l5 10" stroke="#ea0000" strokeWidth="4" />
      <path d="M387 516l57 62" stroke="#e3173f" strokeWidth="1.800" />
      <path d="M504 248h12v2l-5 2h-5z" fill="#ff78c4" />
      <path d="M625 316l9 4 1-3M632 320l-2 10M577 276l5-4" stroke="#ff9ad2" strokeWidth="1.800" />
      <path d="M467 295l6 4M464 312l8 2M462 345l7-2M448 380l4 3M446 376l8 2M432 405l3 2M468 300l-3 20M450 370l3 14M462 300l8 3" stroke="#5a3fa8" strokeDasharray="1 2" strokeWidth="1.500" />
      <path d="M422 440h10M401 480l4 30M412 463l6-3M399 516l8-10M638 247l8 2M647 255l3 2M655 250l6 7" stroke="#e03c8c" strokeDasharray="1.500 2.500" strokeWidth="1.200" />
      <path d="M672 193l-6 3v5M667 197l7 2" stroke="#5f9d8b" strokeWidth="1.400" />
      <path d="M396 508l28-85M406 488c20-3 34 0 50-2" stroke="#b03866" strokeWidth=".6" />
      <path d="M929 567h6v1h13v15h-3v-2h-3v2h-3v-2h-4v2h-3v-2h-3z" fill="#fff" stroke="#fff" />
      <path d="M932 573.500h13M932 578.500h13" stroke="#30332f" strokeWidth="1.200" />
    </svg>
  );
}

/* ---------- centre ---------- */
const Sep = ({ className = "" }: { className?: string }) => <div className={`h-[14px] w-px shrink-0 bg-[#9b9f9f] ${className}`} />;
function Center() {
  return (
    <div className="ml-[6px] flex w-[662px] shrink-0 flex-col text-[#4c4c4c]">
      <div className="flex h-[22px] shrink-0 items-center">
        <div className="flex h-[24px] w-[110px] items-center self-start rounded-t-[4px] bg-[#007ac8] pl-[6px] text-white">
          <MapIcon /><span className="ml-[5px] flex-1 whitespace-nowrap pt-px tracking-[-0.25px]">Flood Map</span><X size={14} color="#fff" strokeWidth={1.800} className="mr-[5px]" />
        </div>
        <div className="flex items-center gap-[5px] pl-[6px] pt-[3px] text-[#222]">
          <Ico><rect x="2.700" y=".7" width="12.500" height="14.500" fill="#fff7c4" stroke="#d5b93d" /><path d="M0 2.500h3M0 5h3M0 7.500h3M0 10h3M0 12.500h3" stroke="#444" /><path d="M7 4.500H5.500v6H7M10.500 4.500H12v6h-1.500" stroke="#444" /></Ico>
          <span className="whitespace-nowrap">New Notebook</span>
        </div>
        <div className="flex-1" /><div className="mr-[3px] pt-px"><Down /></div>
      </div>
      <div className="h-[2px] shrink-0 bg-[#007ac8]" />
      <div className="flex h-[430px] shrink-0 flex-col border border-[#d2d6d6] bg-[#f7ffff]">
        <FloodMap />
        <div className="flex h-[25px] items-center pt-px">
          <div className="ml-[5px] flex h-[22px] w-[100px] shrink-0 items-center justify-between border border-[#858989] bg-white pl-[5px] pr-[4px] tracking-[-0.2px] text-[#222]">1:132 576<Ico s={6} vb={6}><path d="M0 1h6L3 5z" fill="#333" /></Ico></div>
          <Sep className="ml-[4px]" />
          <Ico className="ml-[7px]"><path d="M.5 .5h10v5M.5 .5v10h6M5.500 .5v10M.5 5.500h10" stroke="#6e6e6e" /><path d="M11.500 7v9M7 11.500h9" stroke="#3e87c6" strokeWidth="1.800" /></Ico>
          <Ico s={14} vb={14} className="ml-[7px]"><path d="M.5 .5h12.500v12.500H.5zM.5 3.500h13M.5 6.500h13M.5 9.500h13M3.500 .5v13M6.500 .5v13M9.500 .5v13" stroke="#8c8c8c" /></Ico>
          <Ico className="ml-[7px]"><path d="M1 2h4M1 5h3M10 3h6M13 0v6M1 2v3M10 11.500l2-2 2 2" stroke="#555" strokeWidth="1.200" /><path d="M2 13l5-8 3-1M7 9l3-4" stroke="#3e87c6" strokeDasharray="2 1" strokeWidth="1.300" /><path d="M6 12.500h9v3H6z" fill="#ccd" stroke="#555" strokeWidth=".8" /><path d="M0 13h3v3H0z" fill="#2f9e59" /></Ico>
          <Ico className="ml-[6px]"><path d="M0 1h7v6H0z" fill="#cfe9cf" /><path d="M8 0v16M0 8h16" stroke="#555" strokeDasharray="2 1" strokeWidth="1.300" /><rect x="6.500" y="6.500" width="3" height="3" fill="#555" /></Ico>
          <Ico s={17} vb={17} className="ml-[6px]"><path d="M1 12V5l4 6V4" stroke="#1878be" strokeWidth="1.900" /><path d="M8.500 1v15M9 16l6-8" stroke="#555" /><path d="M10 2c3 0 4 2 4 4M12 5l2 2 2-2" stroke="#3e9bd8" strokeWidth="1.500" /></Ico>
          <Sep className="ml-[6px]" />
          <span className="ml-[25px] w-[145px] whitespace-nowrap tracking-[-0.65px]">73,2147932°O 45,8536495°N</span>
          <div className="ml-[9px]"><ChevronDown size={13} color="#333" strokeWidth={2.800} /></div>
          <div className="flex-1" />
          <Sep />
          <Ico className="ml-[7px] opacity-60"><path d="M6 1h9v9M8 1l3 5 4-4" stroke="#777" /><circle cx="5" cy="8" r="4" fill="#dff1fb" stroke="#7aa5c0" /><path d="M3 8h4M5 6v4" stroke="#4c8ab0" /><path d="M8 11l4 4" stroke="#e3a06a" strokeWidth="2" /></Ico>
          <span className="ml-[4px] whitespace-nowrap tracking-[-0.42px] text-[#969a9a]">Entités sélectionnées : 0</span>
          <Sep className="ml-[7px]" />
          <div className="ml-[9px] h-[13px] w-[4px] bg-[#5b5b5b]" /><div className="ml-[3px] h-[13px] w-[4px] bg-[#5b5b5b]" />
          <Sep className="ml-[9px]" />
          <Ico className="ml-[6px] mr-[5px]"><path d="M1 6.500C2.500 1 11 .5 13 4M15 1v5h-5M15 9.500C13.500 15 5 15.500 3 12M1 15v-5h5" stroke="#3e9bd8" strokeWidth="2.400" /></Ico>
        </div>
      </div>
      <div className="mt-[6px] flex h-[22px] shrink-0 items-center text-[#222]">
        <div className="flex w-[112px] items-center gap-[6px] pl-[6px] pt-[3px]"><TableIcon /><span className="whitespace-nowrap tracking-[-0.25px]">DA_Census</span></div>
        <div className="flex h-[23px] w-[114px] items-center self-start rounded-t-[4px] bg-[#d6dbd9] pl-[6px] text-[#4c4c4c]"><TableIcon /><span className="ml-[6px] flex-1 whitespace-nowrap pt-px tracking-[-0.2px]">csvNew.csv</span><X size={14} color="#555" strokeWidth={1.800} className="mr-[4px]" /></div>
        <div className="flex-1" /><div className="mr-[3px] pt-px"><Down /></div>
      </div>
      <div className="flex h-[90px] shrink-0 flex-col border-x border-b border-t-2 border-[#d2d6d6] bg-[#eee] px-px">
        <div className="mt-[2px] flex h-[30px] shrink-0 items-center border border-[#b9bdbd] bg-[#eff6f5] pl-[4px]">
          <span className="w-[54px] font-bold tracking-[-0.45px]">Champ :</span>
          <div className="flex gap-[11px]"><FieldIcon add /><FieldIcon /></div>
          <div className="ml-[11px] mr-[7px] h-[22px] w-px bg-[#ccd0d0]" />
          <span className="w-[67px] whitespace-nowrap font-bold tracking-[-0.4px]">Sélection :</span>
          <div className="flex items-center gap-[10px]">
            <Ico className="opacity-60"><path d="M8.500 6V.5h-8v10h5M2 2l3 3 3-3" stroke="#888" /><rect x="6.500" y="6.500" width="9" height="9" fill="#fff" stroke="#888" /><path d="M7 6h9v3H7z" fill="#7fb9dc" /><path d="M7 12h9M11 9v6" stroke="#999" /></Ico>
            <Ico className="opacity-60"><path d="M6 1h9v8H8M6 4h9M6 7h9" stroke="#999" /><circle cx="5" cy="8" r="4" fill="#dff1fb" stroke="#7aa5c0" /><path d="M3 8h4M5 6v4" stroke="#4c8ab0" /><path d="M8 11l4 4" stroke="#e3a06a" strokeWidth="2" /></Ico>
            <Ico><path d="M.5 1h10v6H.5zM.5 4h10M6 9.500h9.500v6H6zM6 12.500h9" fill="#cfe9f5" stroke="#444" strokeWidth="1.300" /><path d="M11 1.500h3v4M12 4l2 2 2-2M4 14.500H2.500V10M.5 12l2-2 2 2" stroke="#444" strokeWidth="1.200" /></Ico>
            <Rows dim />
            <Ico className="opacity-60"><path d="M.5 1.500h14v12H.5zM.5 5.500h14M.5 9.500h14" stroke="#888" /><path d="M1 6h13v3H1z" fill="#bfe2f0" /><path d="M3 9l6 6M9 9l-6 6" stroke="#d4553a" strokeWidth="1.800" /></Ico>
            <Ico className="opacity-60"><path d="M4.500 .5h11v9h-3M4.500 3h11M.5 5.500h11v10H.5zM.5 9h11M.5 12h11" stroke="#777" fill="#e6f3f5" /></Ico>
          </div>
          <div className="ml-[9px] h-[22px] w-px bg-[#ccd0d0]" />
          <span className="ml-[7px] w-[49px] whitespace-nowrap font-bold tracking-[-0.4px]">Lignes :</span>
          <Rows dim add /><Caret className="ml-[4px]" />
          <div className="flex-1" /><div className="mr-[7px]"><Burger /></div>
        </div>
        <div className="mt-px flex h-[26px] shrink-0 flex-col border border-[#c3c5c5]">
          <div className="flex h-[7px]"><div className="w-[16px] bg-white" /><div className="w-[135px] border-x border-[#c3c5c5] bg-[#cde4f4]" /><div className="w-[241px] border-r-2 border-[#c3c5c5]" /><div className="w-[217px] border-r border-[#c3c5c5]" /></div>
          <div className="flex h-[17px] items-center pl-[3px]"><ChevronLeft size={12} color="#555" /><div className="ml-[2px] h-[9px] w-[389px] rounded-full bg-[#b3b8b6]" /><ChevronRight size={12} color="#555" className="ml-[219px]" /></div>
        </div>
        <div className="-mx-px mt-px flex flex-1 items-center overflow-hidden bg-[#f7ffff] pl-px">
          <div className="flex h-[22px] w-[32px] shrink-0 items-center justify-center border border-[#4ab0e6] bg-[#c6cac8]"><Rows blue /></div>
          <div className="-mt-[5px] ml-[11px]"><svg width="15" height="10" viewBox="0 0 15 10" fill="none"><path d="M.5 .5h14v9H.5zM.5 3.500h14M.5 6.500h14" fill="#a8d0ea" stroke="#555" /></svg></div>
          <Ico s={10} vb={10} className="ml-[17px]"><path d="M1 0v10" stroke="#b5b5b5" strokeWidth="1.300" /><path d="M9 1v8L3 5z" fill="#b5b5b5" /></Ico>
          <Ico s={10} vb={10} className="ml-[13px]"><path d="M9.300 0v10" stroke="#444" strokeWidth="1.300" /><path d="M0 1v8l7-4z" fill="#444" /></Ico>
          <span className="ml-[12px] w-[133px] shrink-0 whitespace-nowrap tracking-[-0.55px]">0 sur *2 000 sélectionnés</span>
          <div className="flex h-[20px] w-[158px] shrink-0 items-center justify-center whitespace-nowrap border border-[#333] bg-white tracking-[-0.5px] text-[#333]">Charger tous les éléments</div>
          <span className="ml-[8px] w-[43px] shrink-0 whitespace-nowrap tracking-[-0.35px]">Filtres :</span>
          <div className="flex h-[22px] shrink-0 items-center gap-[5px] bg-[#f0f3f6] px-[2px] opacity-80">
            <Ico><circle cx="8" cy="8" r="7" stroke="#c9cdcd" strokeWidth="1.500" /><path d="M8 3v5h4" stroke="#bbb" /><path d="M11 12l4 1-2 2z" fill="#a9d7b4" /></Ico>
            <Ico><circle cx="8" cy="9" r="6.500" stroke="#c9cdcd" /><path d="M4 1v6M7 1v6M10 1v6M2 4h10" stroke="#b5b9b9" /><path d="M10 11l5-1-2 4z" fill="#a9d7b4" /></Ico>
            <Ico><path d="M0 1h13L8 7v8H5V7z" fill="#ccd0d0" /><path d="M8 9h8M8 12h8M8 15h8" stroke="#b5c4e6" strokeWidth="2" strokeDasharray="2 1" /></Ico>
          </div>
          <Sep />
          <Ico s={14} vb={16} className="ml-[4px]"><path d="M8 1v6M3.500 5L8 1l4.500 4" stroke="#9cc99f" strokeWidth="2.200" /><path d="M8 7v8M3.500 11L8 15l4.500-4" stroke="#f3c188" strokeWidth="2.200" /></Ico>
          <div className="ml-[14px] h-[2px] w-[6px] shrink-0 bg-[#555]" />
          <div className="ml-[8px] h-[3px] w-[48px] shrink-0 bg-[#a5a9a8]" /><div className="h-[11px] w-[3px] shrink-0 bg-[#5b5b5b]" /><div className="h-[3px] flex-1 bg-[#dde5e3]" />
        </div>
      </div>
    </div>
  );
}

/* ---------- catalog ---------- */
const tables = ["cgn_canada_eng_basemap", "cgn_canada_shp_eng", "lada000b16a_e", "lagecu000e16a_e", "lcar000b16a_e", "lccs000b16a_e", "lcd_000b16a_e", "lcd_000e16a_e", "lcdagecu000e16a_e", "lcma000b16a_e", "lcsd000a20a_e", "lcsd000b16a_e"];
const TableBox = () => <div className="mb-[2px] h-[13px] w-[16px] shrink-0 rounded-[2px] border border-[#6e6e6e] bg-[#fbfdfb]" />;
function Node({ icon, name, open, deep }: { icon: React.ReactNode; name: string; open?: boolean; deep?: boolean }) {
  return (
    <div className={`flex h-[24px] shrink-0 items-center ${deep ? "pl-[24px]" : "pl-[8px]"}`}>
      <div className={`flex shrink-0 justify-center pb-px ${deep ? "w-[20px] pr-[6px]" : "w-[18px] pr-[4px]"}`}>{open ? <Open /> : <Closed />}</div>{icon}
      <span className={`whitespace-nowrap ${deep ? "ml-[6px] tracking-[-0.4px]" : "ml-[8px] tracking-[-0.5px]"}`}>{name}</span>
    </div>
  );
}
function Catalog() {
  return (
    <div className="ml-[6px] flex w-[312px] shrink-0 flex-col text-[#4c4c4c]">
      <div className="flex h-[551px] shrink-0 flex-col rounded-[3px] border border-[#d2d6d6] bg-[#f7ffff]">
        <div className="flex h-[32px] shrink-0 items-center pb-[2px] pl-[6px] pr-[6px]">
          <span className="flex-1 text-[15px] tracking-[-0.1px] text-[#222]">Catalogue</span><Down /><div className="w-[7px]" /><Pin /><div className="w-[7px]" /><X size={14} color="#444" strokeWidth={1.800} />
        </div>
        <div className="flex h-[23px] shrink-0 items-start pl-[6px] pr-[9px] leading-[18px] tracking-[0.1px]">
          <span className="border-b-2 border-[#007ac8] font-semibold">Projet</span><span className="ml-[10px]">Portail</span><span className="ml-[10px]">Favoris</span>
          <div className="flex-1" /><div className="pt-[3px]"><Burger /></div>
        </div>
        <div className="flex h-[35px] shrink-0 items-center pl-[5px]">
          <Ico s={18} vb={18}><circle cx="9" cy="9" r="8" stroke="#b9bdbd" strokeWidth="1.200" /><path d="M14 9H5M8.500 5L4.500 9l4 4" stroke="#a9adad" strokeWidth="1.600" /></Ico>
          <div className="ml-[5px] flex h-[24px] w-[19px] items-center justify-center border border-r-0 border-[#a9adad] bg-white"><Ico s={13} vb={13}><path d="M1 7l5.500-5L12 7M2.500 6v6.500h8V6M5 12.500V9h3v3.500" stroke="#b5b9b9" /></Ico></div>
          <div className="flex h-[24px] w-[257px] items-center border border-[#8d9191] bg-white pl-[5px] italic tracking-[-0.12px]"><span className="flex-1 pt-px">Rechercher dans Projet</span><Magnifier /><div className="w-[9px]" /><Down /><div className="w-[4px]" /></div>
        </div>
        <div className="flex min-h-0 flex-1">
          <div className="flex w-[286px] shrink-0 flex-col overflow-hidden pt-[2px]">
            <Node name="Cartes" icon={<Folder><path d="M1 5h14v9H1z" fill="#e0c646" /><rect x="3.500" y="6" width="9" height="8" fill="#9cc69e" stroke="#666" /></Folder>} />
            <Node name="Boîtes à outils" icon={<Folder><path d="M1 5h14v9H1z" fill="#e0c646" /><rect x="3" y="8" width="11" height="7" fill="#d05a3c" /><path d="M6.500 8V6h4v2M3 11h11" stroke="#f7d9ce" /></Folder>} />
            <Node name="Notebooks" icon={<Folder><rect x="4" y="5" width="9" height="10" fill="#fff" stroke="#d5b93d" /><path d="M2 7h3M2 9h3M2 11h3M2 13h3M8 8H7v4h1M10 8h1v4h-1" stroke="#444" strokeWidth=".9" /></Folder>} />
            <Node open name="Bases de données" icon={<Folder><path d="M4 8v6c0 2 9 2 9 0V8z" fill="#eee" stroke="#666" /><ellipse cx="8.500" cy="8" rx="4.500" ry="1.600" fill="#fff" stroke="#666" /></Folder>} />
            <Node deep name="CoE_Demo.gdb" icon={<Ico s={17} vb={17}><path d="M1 3v9c0 1.500 3 2 6 2M13 3v4" stroke="#777" /><ellipse cx="7" cy="3" rx="6" ry="2" fill="#fff" stroke="#777" /><path d="M7 12l4.500-4L16 12M8.500 11v5h6v-5" fill="#eee" stroke="#555" /><path d="M10.500 12.500h2V16h-2z" fill="#e0a95c" /></Ico>} />
            <Node deep open name="daaasgeop.postgres.database.azure.com(1)" icon={<Ico s={17} vb={17}><path d="M.8 3v7c0 2.500 11.400 2.500 11.400 0V3z" fill="#f1f4f4" stroke="#666" /><ellipse cx="6.500" cy="3" rx="5.700" ry="1.800" fill="#fff" stroke="#666" /><path d="M6.500 12v3M.5 15.500h12" stroke="#555" strokeWidth="1.500" /></Ico>} />
            {tables.map((t) => (
              <div key={t} className="flex h-[24px] shrink-0 items-center pl-[58px]"><TableBox /><span className="ml-[8px] whitespace-nowrap tracking-[-0.4px]">sdi.public.{t}</span></div>
            ))}
            <div className="flex h-[24px] shrink-0 items-center pl-[58px]"><TableBox /></div>
          </div>
          <div className="flex w-[18px] shrink-0 flex-col items-center bg-[#eee]">
            <ChevronUp size={12} color="#555" className="mt-px" /><div className="mt-[5px] h-[171px] w-[9px] rounded-full bg-[#b3b8b6]" />
            <div className="flex-1" /><ChevronDown size={12} color="#555" className="mb-[3px]" />
          </div>
        </div>
        <div className="flex h-[17px] shrink-0">
          <div className="ml-[5px] flex w-[282px] items-center bg-[#eee] pl-[2px] pr-[3px]"><ChevronLeft size={12} color="#555" /><div className="ml-[3px] h-[8px] w-[221px] rounded-full bg-[#b3b8b6]" /><div className="flex-1" /><ChevronRight size={12} color="#555" /></div>
          <div className="w-[17px] bg-white" />
        </div>
      </div>
      <div className="flex h-[21px] items-center">
        <div className="-mt-px flex h-[21px] w-[65px] items-center justify-center rounded-b-[3px] border border-t-0 border-[#d2d6d6] bg-[#f7ffff] tracking-[-0.3px] text-[#0078c8]">Catalogue</div>
        <span className="ml-[7px] tracking-[-0.2px]">Attributs</span>
      </div>
    </div>
  );
}

export default function App() {
  return (
    <div className="flex h-[738px] w-[1279px] overflow-hidden bg-black pt-[2px] font-['Noto_Sans','Open_Sans',sans-serif] text-[12px] leading-[16px] tracking-[-0.35px]">
      <div className="w-[5px] shrink-0 pt-[41px]">
        <div className="ml-[3px] h-[8px] w-px bg-[#8f93b5]" />
        <div className="ml-[4px] mt-[156px] h-[9px] w-px bg-[#58c4ac]" />
      </div>
      <div className="flex w-[1274px] flex-col border-l border-t border-[#c6c9c9] bg-[#eee]">
        <Ribbon />
        <div className="flex flex-1 pt-[6px]">
          <Contents />
          <Center />
          <Catalog />
        </div>
      </div>
    </div>
  );
}
